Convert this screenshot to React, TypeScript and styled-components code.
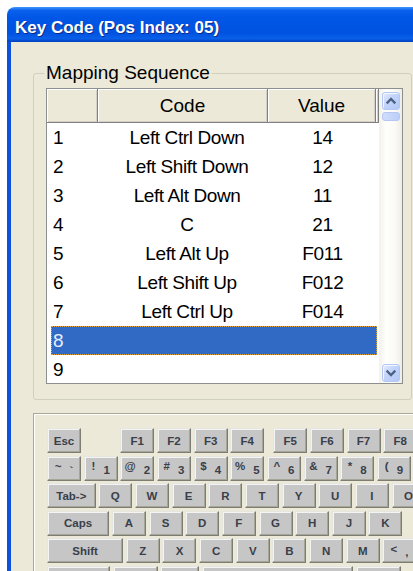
import styled, { createGlobalStyle } from "styled-components"

type Mapping = { code: string; value: string }

const mappings: Mapping[] = [
    { code: "Left Ctrl Down", value: "14" },
    { code: "Left Shift Down", value: "12" },
    { code: "Left Alt Down", value: "11" },
    { code: "C", value: "21" },
    { code: "Left Alt Up", value: "F011" },
    { code: "Left Shift Up", value: "F012" },
    { code: "Left Ctrl Up", value: "F014" },
    { code: "", value: "" },
    { code: "", value: "" },
]
const SELECTED = 7

// one keyboard key: label (or shifted + plain char), width in key units, extra space before it
type KeyDef = { l: string; s?: string; u?: number; push?: number }

const k = (l: string, u = 1, push = 0): KeyDef => ({ l, u, push })
const d = (s: string, l: string): KeyDef => ({ l, s })

const keyRows: KeyDef[][] = [
    [k("Esc"), k("F1", 1, 36.67), k("F2"), k("F3"), k("F4"), k("F5", 1, 6.3), k("F6"), k("F7"), k("F8")],
    [d("~", "`"), d("!", "1"), d("@", "2"), d("#", "3"), d("$", "4"), d("%", "5"), d("^", "6"), d("&", "7"), d("*", "8"), d("(", "9")],
    [k("Tab->", 1.4), ..."QWERTYUIO".split("").map(c => k(c))],
    [k("Caps", 1.77), ..."ASDFGHJK".split("").map(c => k(c))],
    [k("Shift", 2.15), ..."ZXCVBNM".split("").map(c => k(c)), d("<", ",")],
    // bottom row only shows its top edge
    [k("", 1.79), k("", 1.3), k("", 1.14), k("", 4.19), k("", 1.3)],
]

function Chevron({ up }: { up?: boolean }) {
    return (
        <svg width="16" height="16" viewBox="0 0 16 16" aria-hidden>
            <path
                d={up ? "M4.5 9.5 L8 6 L11.5 9.5" : "M4.5 6.5 L8 10 L11.5 6.5"}
                fill="none"
                stroke="#4D6185"
                strokeWidth="2.3"
                strokeLinecap="square"
            />
        </svg>
    )
}

export default function App() {
    return (
        <>
            <GlobalStyle />
            <Window>
                <TitleBar>Key Code (Pos Index: 05)</TitleBar>
                <Frame>
                    <GroupBox>
                        <Legend>Mapping Sequence</Legend>
                        <ListView>
                            <ListContent>
                                <HeaderRow>
                                    <HeaderCell />
                                    <HeaderCell>Code</HeaderCell>
                                    <HeaderCell>Value</HeaderCell>
                                    <HeaderCell />
                                </HeaderRow>
                                {mappings.map((m, i) => (
                                    <Row key={i} $selected={i === SELECTED}>
                                        <NumCell>{i + 1}</NumCell>
                                        <CodeCell>{m.code}</CodeCell>
                                        <ValueCell>{m.value}</ValueCell>
                                    </Row>
                                ))}
                            </ListContent>
                            <ScrollBar>
                                <ScrollButton>
                                    <Chevron up />
                                </ScrollButton>
                                <Thumb />
                                <ScrollButton $bottom>
                                    <Chevron />
                                </ScrollButton>
                            </ScrollBar>
                        </ListView>
                    </GroupBox>
                    <KeyboardPanel>
                        {keyRows.map((row, r) => (
                            <KeyRow key={r}>
                                {row.map((key, i) => (
                                    <Key key={i} $u={key.u ?? 1} $push={key.push ?? 0}>
                                        {key.s ? (
                                            <>
                                                <Shifted>{key.s}</Shifted>
                                                <Plain>{key.l}</Plain>
                                            </>
                                        ) : (
                                            key.l
                                        )}
                                    </Key>
                                ))}
                            </KeyRow>
                        ))}
                    </KeyboardPanel>
                </Frame>
            </Window>
        </>
    )
}

const GlobalStyle = createGlobalStyle`
    html, body {
        margin: 0;
        padding: 0;
        background: #ffffff;
        overflow: hidden;
        width: 413px;
        height: 571px;
    }
`

const Window = styled.div`
    margin: 7px 0 0 7px;
    width: 470px;
    border-radius: 8px 8px 0 0;
    overflow: hidden;
`

const TitleBar = styled.div`
    height: 35px;
    box-sizing: border-box;
    padding: 6px 0 0 8px;
    display: flex;
    align-items: center;
    font-family: "Liberation Sans", Arial, sans-serif;
    font-size: 17px;
    font-weight: 700;
    color: #ffffff;
    text-shadow: 1px 1px 0 #0c2a8c;
    background: linear-gradient(
        180deg,
        #3d95ff 0%,
        #0a61ec 10%,
        #0056e6 30%,
        #0053e0 75%,
        #0a5fe8 90%,
        #0040c0 100%
    );
`

const Frame = styled.div`
    height: 560px;
    box-sizing: border-box;
    border-left: 4px solid #0b52df;
    background: #ece9d8;
    padding: 20px 0 0 22px;
    font-family: "Liberation Sans", Arial, sans-serif;
`

const GroupBox = styled.fieldset`
    margin: 0;
    width: 379px;
    min-width: 0;
    box-sizing: border-box;
    padding: 4px 8px 15px 12px;
    border: 1px solid #d0d0bf;
    border-radius: 3px;
`

const Legend = styled.legend`
    margin-left: -2px;
    padding: 0 2px;
    font-size: 19px;
    line-height: 22px;
    color: #000000;
`

const ListView = styled.div`
    display: flex;
    width: 357px;
    height: 296px;
    box-sizing: border-box;
    border: 1px solid #8e8f8f;
    background: #ffffff;
    overflow: hidden;
`

const ListContent = styled.div`
    flex: 1;
    display: flex;
    flex-direction: column;
    font-size: 19px;
    color: #000000;
`

const HeaderRow = styled.div`
    display: grid;
    grid-template-columns: 51px 170px 108px 1fr;
    height: 34px;
    flex: none;
`

const HeaderCell = styled.div`
    box-sizing: border-box;
    background: #ece9d8;
    border-right: 1px solid #808080;
    border-bottom: 1px solid #808080;
    box-shadow: inset 1px 1px #ffffff, inset -1px -1px #d4d0c8;
    text-align: center;
    line-height: 33px;
`

const Row = styled.div<{ $selected?: boolean }>`
    display: grid;
    grid-template-columns: 47px 170px 1fr;
    align-items: center;
    height: 29px;
    flex: none;
    margin: 0 2px 0 4px;
    letter-spacing: -0.4px;
    background: ${p => (p.$selected ? "#316ac5" : "transparent")};
    color: ${p => (p.$selected ? "#e6eefc" : "#000000")};
    outline: ${p => (p.$selected ? "1px dotted #e4a23c" : "none")};
    outline-offset: -1px;
`

const NumCell = styled.span`
    padding-left: 2px;
`

const CodeCell = styled.span`
    text-align: center;
    padding-left: 8px;
`

const ValueCell = styled.span`
    text-align: center;
`

const ScrollBar = styled.div`
    width: 23px;
    flex: none;
    display: flex;
    flex-direction: column;
    align-items: center;
    padding: 3px 0 1px;
    box-sizing: border-box;
    background: linear-gradient(90deg, #f3f1ec 0%, #fefefb 30%, #fbfaf6 70%, #eeede5 100%);
`

const ScrollButton = styled.div<{ $bottom?: boolean }>`
    width: 18px;
    height: 18px;
    box-sizing: border-box;
    margin-top: ${p => (p.$bottom ? "auto" : "0")};
    display: flex;
    align-items: center;
    justify-content: center;
    border: 1px solid #b4c6f2;
    border-radius: 3px;
    background: linear-gradient(135deg, #e2eafd 0%, #c3d4fb 45%, #b3c8f6 100%);
    box-shadow: inset 1px 1px #f2f6ff;
`

const Thumb = styled.div`
    width: 18px;
    height: 9px;
    margin-top: 2px;
    box-sizing: border-box;
    border: 1px solid #b4c6f2;
    border-radius: 3px;
    background: linear-gradient(90deg, #cfdcfc, #bccff8);
`

const KeyboardPanel = styled.div`
    margin-top: 13px;
    width: 440px;
    height: 200px;
    box-sizing: border-box;
    border: 1px solid #aca899;
    box-shadow: inset 1px 1px #ffffff;
    padding: 14px 0 0 13px;
    display: flex;
    flex-direction: column;
    gap: 2.6px;
`

const KeyRow = styled.div`
    display: flex;
    gap: 2.67px;
`

const Key = styled.div<{ $u: number; $push: number }>`
    flex: none;
    width: calc(${p => p.$u} * 36.67px - 2.67px);
    height: 25px;
    margin-left: ${p => p.$push}px;
    box-sizing: border-box;
    display: flex;
    align-items: center;
    justify-content: center;
    gap: 8px;
    border: 1px solid;
    border-color: #e6e6e0 #7e7d72 #7e7d72 #e6e6e0;
    box-shadow: inset -1px -1px #a6a59a, inset 1px 1px #f4f4f4;
    background: #c6c6c6;
    font-family: "Liberation Sans", Arial, sans-serif;
    font-size: 11.5px;
    font-weight: 700;
    color: #3a3f4a;
`

const Shifted = styled.span`
    padding-bottom: 4px;
`

const Plain = styled.span`
    padding-top: 3px;
`
